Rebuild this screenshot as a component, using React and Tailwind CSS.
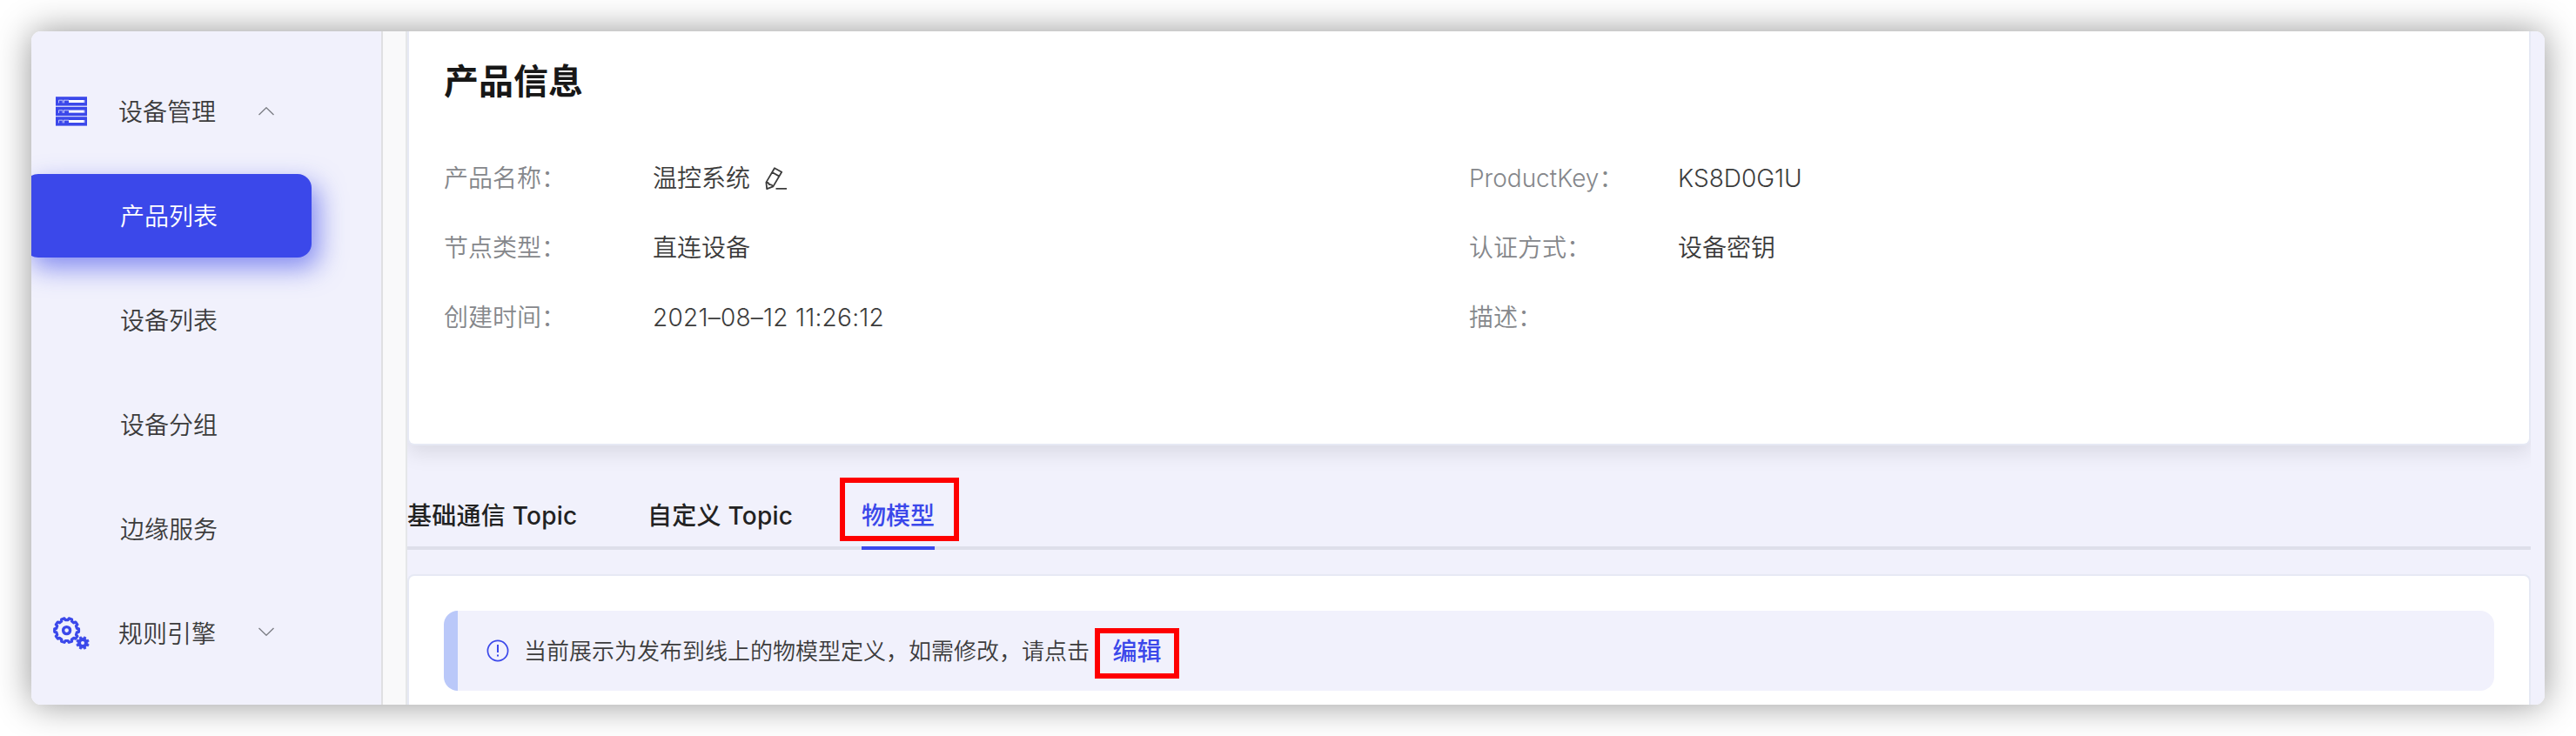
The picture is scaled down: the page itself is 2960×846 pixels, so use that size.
import React from "react";

function ServerIcon() {
  return (
    <svg width="36" height="34" viewBox="0 0 36 34" fill="none">
      {[0.2, 11.8, 23.2].map((y) => (
        <g key={y}>
          <rect x="0" y={y} width="36" height="10.4" fill="#3b48ea" />
          <path d={`M3.5 ${y + 7.2}V${y + 4}H8V${y + 7.2}M9.5 ${y + 3.6}V${y + 7.2}M9.5 ${y + 4}H15M33 ${y + 3.8}V${y + 7}`} stroke="#dfe1fb" strokeWidth="0.8" />
          <rect x="15" y={y + 3.8} width="17.5" height="3" fill="#fff" />
        </g>
      ))}
    </svg>
  );
}

function gearPath(cx, cy, teeth, ro, ri) {
  const pts = [];
  const step = (Math.PI * 2) / teeth;
  for (let i = 0; i < teeth; i++) {
    const a = i * step - Math.PI / 2 + step / 2;
    [[-0.3, ri], [-0.2, ro], [0.2, ro], [0.3, ri]].forEach(([k, r]) => {
      pts.push(`${(cx + r * Math.cos(a + k * step)).toFixed(2)} ${(cy + r * Math.sin(a + k * step)).toFixed(2)}`);
    });
  }
  return `M${pts.join("L")}Z`;
}

function GearsIcon() {
  return (
    <svg width="42" height="38" viewBox="0 0 42 38" fill="none">
      <path d={gearPath(15.6, 15.6, 10, 14, 12)} stroke="#3b48ea" strokeWidth="3.2" strokeLinejoin="round" />
      <circle cx="15.6" cy="15.6" r="4" stroke="#3b48ea" strokeWidth="3.4" />
      <path d={gearPath(34, 30, 8, 7.4, 5.8)} fill="#3b48ea" stroke="#3b48ea" strokeWidth="0.8" strokeLinejoin="round" />
      <circle cx="34" cy="30" r="2" fill="#f1f1fc" />
    </svg>
  );
}

function Chevron({ up }) {
  return (
    <svg width="18" height="10" viewBox="0 0 18 10" fill="none" stroke="#7d7f86" strokeWidth="1.4">
      <path d={up ? "M0.5 9L9 0.8L17.5 9" : "M0.5 1L9 9.2L17.5 1"} />
    </svg>
  );
}

function EditIcon() {
  return (
    <svg width="26" height="26" viewBox="0 0 26 26" fill="none" stroke="#3c3c3c" strokeWidth="1.8" strokeLinejoin="round">
      <path d="M11 1.2L19.2 5.8L9.4 22.4L2.2 25.2L1.4 17.6Z M8.2 6L16.4 10.6 M1.4 17.6C3.4 17.6 4.6 18.6 5 20.2C6.8 19.8 8.4 20.6 9.4 22.4 M12.5 24.8H25" />
    </svg>
  );
}

function NavItem({ children }) {
  return <div className="flex h-[120px] items-center pt-px pl-[102px] text-[28px]">{children}</div>;
}

function Field({ label, children }) {
  return (
    <div className="flex h-20 items-center pt-px text-[28px]">
      <div className="w-60 text-[#85878b]">{label}</div>
      <div className="flex items-center text-[#3c3c3c]">{children}</div>
    </div>
  );
}

export default function App() {
  return (
    <div className="h-[846px] w-[2960px] bg-white p-9 font-['Inter','Noto_Sans_CJK_SC',sans-serif] font-[350]">
      <div className="h-[774px] w-[2888px] rounded-[11px] shadow-[0_0_40px_rgba(0,0,0,0.42)]">
        <div className="flex h-full overflow-hidden rounded-[11px] bg-[#f1f1fc]">
          <aside className="w-[404px] shrink-0 overflow-hidden border-r-2 border-[#e0e0e2] pt-8 text-[#3c3c3c]">
            <div className="flex h-[120px] items-center pl-7 text-[28px]">
              <ServerIcon />
              <span className="ml-9 w-[113px] pt-px">设备管理</span>
              <span className="ml-12"><Chevron up /></span>
            </div>
            <div className="flex h-[120px] items-center">
              <div className="-ml-2 flex h-24 w-[330px] items-center rounded-2xl bg-[#3b48ea] pt-px pl-[110px] text-[28px] text-white shadow-[8px_12px_30px_rgba(59,72,234,0.6)]">
                产品列表
              </div>
            </div>
            <NavItem>设备列表</NavItem>
            <NavItem>设备分组</NavItem>
            <NavItem>边缘服务</NavItem>
            <div className="flex h-[120px] items-center pl-[25px] text-[28px]">
              <GearsIcon />
              <span className="ml-[33px] w-[113px] pt-px">规则引擎</span>
              <span className="ml-12 -mt-1"><Chevron /></span>
            </div>
          </aside>
          <div className="w-[26px] shrink-0 bg-[#f9f9fa]" />
          <main className="flex w-[2442px] shrink-0 flex-col overflow-hidden border-l-2 border-[#e5e7e9]">
            <section className="h-[476px] shrink-0 rounded-b-lg border-2 border-t-0 border-[#e6e9f4] bg-white px-10 pt-[34px] shadow-[0_8px_24px_rgba(0,0,0,0.1)]">
              <h1 className="text-[40px] leading-[48px] font-bold text-[#171717]">产品信息</h1>
              <div className="mt-[46px] grid grid-cols-[1178px_1fr]">
                <Field label="产品名称：">
                  温控系统
                  <span className="ml-[17px]"><EditIcon /></span>
                </Field>
                <Field label="ProductKey：">KS8D0G1U</Field>
                <Field label="节点类型：">直连设备</Field>
                <Field label="认证方式：">设备密钥</Field>
                <Field label="创建时间："><span className="tracking-[0.25px]">2021–08–12 11:26:12</span></Field>
                <Field label="描述：" />
              </div>
            </section>
            <nav className="mt-9 flex h-[84px] shrink-0 gap-20 border-b-4 border-[#dedfea] text-[28px] font-medium text-[#222]">
              <div className="flex h-[84px] w-[196px] items-center pt-[5px] whitespace-nowrap tracking-[0.25px]">基础通信 Topic</div>
              <div className="flex h-[84px] w-[166px] items-center pt-[5px] whitespace-nowrap tracking-[0.25px]">自定义 Topic</div>
              <div className="relative flex h-[84px] items-center border-b-4 border-[#3b48ea] pt-[9px] whitespace-nowrap text-[#3b48ea]">
                物模型
                <div className="absolute top-px -left-[25px] h-[73px] w-[137px] border-[6px] border-[#fe0000]" />
              </div>
            </nav>
            <section className="mt-7 h-[160px] shrink-0 rounded-t-lg border-2 border-b-0 border-[#e6e9f4] bg-white px-10 pt-10">
              <div className="flex h-[92px] items-center rounded-2xl border-l-[16px] border-[#bac8f9] bg-[#f1f1fc] pl-[33px] text-[26px] text-[#3c3c3c]">
                <svg width="26" height="26" viewBox="0 0 26 26" fill="none" stroke="#3b48ea" strokeWidth="1.7">
                  <circle cx="13" cy="13" r="11.6" />
                  <path d="M13 6V15M13 17.5V19.5" strokeWidth="2" />
                </svg>
                <span className="ml-[17px] whitespace-nowrap">当前展示为发布到线上的物模型定义，如需修改，请点击</span>
                <span className="ml-[6px] flex h-[58px] w-[97px] translate-y-[3px] items-center justify-center border-[6px] border-[#fe0000] pb-[5px] text-[28px] leading-none font-medium text-[#3b48ea]">
                  编辑
                </span>
              </div>
            </section>
          </main>
        </div>
      </div>
    </div>
  );
}
